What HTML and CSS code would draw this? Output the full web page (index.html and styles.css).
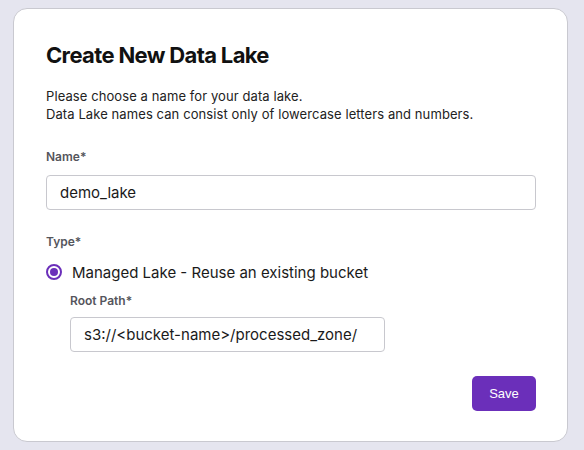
FILE: index.html
```html
<!DOCTYPE html>
<html>
<head>
<meta charset="utf-8">
<link rel="stylesheet" href="styles.css">
</head>
<body>
<div class="card">
  <h1 class="title">Create New Data Lake</h1>
  <p class="desc">Please choose a name for your data lake.<br>Data Lake names can consist only of lowercase letters and numbers.</p>
  <div class="label name-label">Name*</div>
  <div class="input name-input">demo_lake</div>
  <div class="label type-label">Type*</div>
  <div class="radio-row">
    <span class="radio"><span class="dot"></span></span>
    <span class="radio-text">Managed Lake - Reuse an existing bucket</span>
  </div>
  <div class="sub">
    <div class="label root-label">Root Path*</div>
    <div class="input root-input">s3://&lt;bucket-name&gt;/processed_zone/</div>
  </div>
  <div class="actions">
    <button class="save">Save</button>
  </div>
</div>
</body>
</html>
```
FILE: styles.css
```css
html, body {
  margin: 0;
  padding: 0;
  background: #e5e5ef;
  font-family: Inter, "Noto Sans", sans-serif;
}
body {
  width: 584px;
  height: 450px;
  overflow: hidden;
}
.card {
  box-sizing: border-box;
  margin: 8px 0 0 13px;
  width: 555px;
  height: 434px;
  background: #fff;
  border: 1px solid #c9c9d0;
  border-radius: 14px;
  padding: 32px 31px 0 32px;
  display: flex;
  flex-direction: column;
}
.title {
  margin: 0;
  font-size: 22px;
  line-height: 28px;
  font-weight: 700;
  color: #111;
  letter-spacing: -0.65px;
}
.desc {
  margin: 18px 0 0;
  font-size: 13px;
  line-height: 18px;
  color: #222;
  letter-spacing: 0.09px;
}
.label {
  font-size: 12px;
  line-height: 16px;
  font-weight: 600;
  color: #55555c;
}
.name-label { margin-top: 26px; }
.input {
  box-sizing: border-box;
  height: 35px;
  border: 1px solid #c8c8ce;
  border-radius: 4px;
  padding: 0 13px;
  display: flex;
  align-items: center;
  font-size: 15px;
  color: #1a1a1a;
}
.name-input { margin-top: 10px; }
.type-label { margin-top: 24px; }
.radio-row {
  margin-top: 11px;
  height: 22px;
  display: flex;
  align-items: center;
  gap: 10px;
}
.radio {
  box-sizing: border-box;
  width: 16px;
  height: 16px;
  border: 2px solid #6b2fba;
  border-radius: 50%;
  display: flex;
  align-items: center;
  justify-content: center;
  flex: none;
}
.dot {
  width: 8px;
  height: 8px;
  border-radius: 50%;
  background: #6b2fba;
}
.radio-text {
  font-size: 15px;
  color: #1a1a1a;
}
.sub {
  padding-left: 24px;
  margin-top: 10px;
}
.root-input {
  margin-top: 8px;
  width: 315px;
}
.actions {
  margin-top: 24px;
  display: flex;
  justify-content: flex-end;
}
.save {
  width: 64px;
  height: 35px;
  border: none;
  border-radius: 5px;
  background: #6b2fba;
  color: #fff;
  font-family: "Liberation Sans", Arial, sans-serif;
  font-size: 13px;
  font-weight: 500;
  padding: 0;
}
```
